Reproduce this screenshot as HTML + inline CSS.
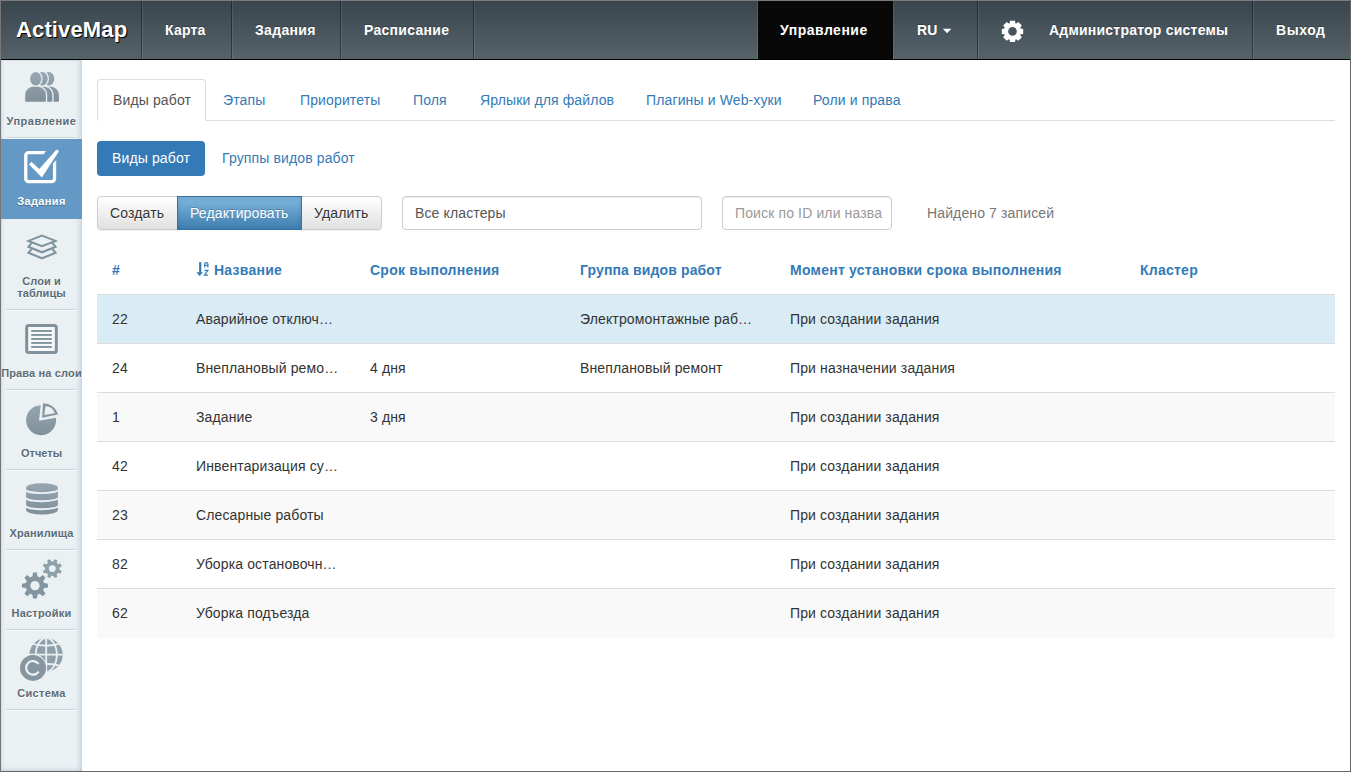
<!DOCTYPE html>
<html><head><meta charset="utf-8">
<style>
*{box-sizing:border-box;margin:0;padding:0}
html,body{width:1351px;height:772px;overflow:hidden;background:#fff}
body{font-family:"Liberation Sans",sans-serif;font-size:14px;color:#333;position:relative;line-height:20px;letter-spacing:.13px}
.frame{position:absolute;left:0;top:0;width:1351px;height:772px;border-top:1px solid #7b7b7b;border-left:1px solid #777;border-right:1px solid #666;border-bottom:1px solid #666;pointer-events:none;z-index:50}
.nav{position:absolute;left:0;top:0;width:1351px;height:60px;background:linear-gradient(#39454c,#56636a);border-bottom:1px solid #000}
.nav .ln{position:absolute;top:1px;width:1px;height:58px;background:rgba(255,255,255,.1)}
.nav .it{position:absolute;top:0;height:59px;line-height:61px;color:#fff;font-weight:bold;font-size:14px;padding-left:22px;white-space:nowrap;border-left:1px solid rgba(255,255,255,.1);border-right:1px solid rgba(0,0,0,.4);text-shadow:0 -1px 0 rgba(0,0,0,.25)}
.nav .brand{left:1px;width:141px;font-size:22px;padding-left:15px;border-left:none!important;line-height:59px;text-shadow:1px 1px 1px #000}
.sidebar{position:absolute;left:1px;top:60px;width:81px;height:711px;background:#ebf0f3;box-shadow:inset 0 1px 0 rgba(205,225,238,.9),inset 3px 0 3px -2px rgba(170,200,220,.5),inset -5px 0 5px -3px rgba(150,185,210,.55),inset 0 -4px 4px -3px rgba(150,185,210,.45)}
.sbsep{position:absolute;left:6px;width:70px;height:2px;border-top:1px solid #c8d8e2;border-bottom:1px solid #f8fafb}
.sbact{position:absolute;left:1px;top:139px;width:81px;height:80px;background:#6399c4}
.lbl{position:absolute;left:1px;width:81px;text-align:center;white-space:nowrap;font-size:11px;font-weight:bold;line-height:13px;color:#5b6b76;text-shadow:0 1px 0 #fff}
.lbl.wh{color:#fff;text-shadow:0 1px 1px rgba(0,0,0,.3)}
.tabs{position:absolute;left:97px;top:79px;width:1238px;height:42px;border-bottom:1px solid #ddd}
.tabs a{position:absolute;top:0;height:41px;line-height:20px;padding:10px 15px;color:#337ab7;text-decoration:none;white-space:nowrap;border:1px solid transparent;border-radius:4px 4px 0 0}
.tabs a.act{color:#555;background:#fff;border-color:#ddd;border-bottom-color:#fff;height:42px}
.pill{position:absolute;top:141px;height:35px;line-height:20px;padding:7px 15px;white-space:nowrap;border-radius:4px;color:#337ab7}
.pill.act{background:#337ab7;color:#fff}
.btn{position:absolute;top:196px;height:34px;line-height:20px;padding:6px 12px;white-space:nowrap;border:1px solid #ccc;color:#333;background:linear-gradient(#fff,#e0e0e0);text-shadow:0 1px 0 #fff;box-shadow:inset 0 1px 0 rgba(255,255,255,.15),0 1px 1px rgba(0,0,0,.075)}
.btn.act{background:linear-gradient(#7fb9df,#3e7daf);border-color:#3271a3;color:#fff;text-shadow:0 -1px 0 rgba(0,0,0,.2);box-shadow:inset 0 2px 4px rgba(0,0,0,.1);z-index:2}
.inp{position:absolute;top:196px;height:34px;line-height:20px;padding:6px 12px;border:1px solid #ccc;border-radius:4px;box-shadow:inset 0 1px 1px rgba(0,0,0,.075);color:#555;white-space:nowrap;overflow:hidden}
.found{position:absolute;left:927px;top:203px;color:#777}
table{position:absolute;left:97px;top:246px;width:1238px;border-collapse:collapse;table-layout:fixed}
th,td{padding:14px 15px;line-height:20px;text-align:left;white-space:nowrap;overflow:hidden;text-overflow:ellipsis;vertical-align:top}
th{color:#337ab7;font-weight:bold;letter-spacing:.25px;border-bottom:1px solid #ddd;height:48px}
td{border-top:1px solid #ddd;height:49px}
tbody tr:first-child td{border-top:none;height:48px}
tr.info td{background:#d9ebf5}
tr.st td{background:#f9f9f9}
</style></head>
<body>
<div class="nav">
  <div class="it brand">ActiveMap</div>
  <div class="it" style="left:142px;width:90px;letter-spacing:.2px">Карта</div>
  <div class="it" style="left:232px;width:109px;letter-spacing:.33px">Задания</div>
  <div class="it" style="left:341px;width:133px;letter-spacing:.29px">Расписание</div>
  <div class="ln" style="left:474px"></div>
  <div class="ln" style="left:757px"></div>
  <div class="it" style="left:758px;width:135px;background:#080808;border-left:none;padding-left:22px;letter-spacing:.5px">Управление</div>
  <div class="it" style="left:893px;width:85px;padding-left:23px">RU</div><svg style="position:absolute;left:940px;top:26px" width="14" height="10" viewBox="940 26 14 10"><path d="M942.9,28.7H951.3L947.1,33.2Z" fill="#fff"/></svg>
  <div class="it" style="left:978px;width:275px;padding-left:70px;letter-spacing:.22px">Администратор системы</div>
  <svg style="position:absolute;left:0;top:0" width="1351" height="60"><path d="M1009.60,23.30L1010.00,20.70L1015.00,20.70L1015.40,23.30A8.60,8.60 0 0 1 1016.17,23.62L1018.30,22.07L1021.83,25.60L1020.28,27.73A8.60,8.60 0 0 1 1020.60,28.50L1023.20,28.90L1023.20,33.90L1020.60,34.30A8.60,8.60 0 0 1 1020.28,35.07L1021.83,37.20L1018.30,40.73L1016.17,39.18A8.60,8.60 0 0 1 1015.40,39.50L1015.00,42.10L1010.00,42.10L1009.60,39.50A8.60,8.60 0 0 1 1008.83,39.18L1006.70,40.73L1003.17,37.20L1004.72,35.07A8.60,8.60 0 0 1 1004.40,34.30L1001.80,33.90L1001.80,28.90L1004.40,28.50A8.60,8.60 0 0 1 1004.72,27.73L1003.17,25.60L1006.70,22.07L1008.83,23.62A8.60,8.60 0 0 1 1009.60,23.30ZM1008.20,31.40a4.30,4.30 0 1 0 8.60,0a4.30,4.30 0 1 0 -8.60,0Z" fill="#fff" fill-rule="evenodd"/></svg>
  <div class="it" style="left:1253px;width:97px;border-right:none;letter-spacing:.55px">Выход</div>
</div>

<div class="sidebar"></div>
<div class="sbsep" style="top:137px"></div>
<div class="sbsep" style="top:309px"></div>
<div class="sbsep" style="top:389px"></div>
<div class="sbsep" style="top:469px"></div>
<div class="sbsep" style="top:549px"></div>
<div class="sbsep" style="top:629px"></div>
<div class="sbsep" style="top:709px"></div>
<div class="sbact"></div>
<div class="lbl" style="top:115px;letter-spacing:.5px">Управление</div>
<div class="lbl wh" style="top:195px;letter-spacing:.35px">Задания</div>
<div class="lbl" style="top:275px;letter-spacing:.1px;line-height:12px">Слои и<br>таблицы</div>
<div class="lbl dk" style="top:367px;letter-spacing:.15px">Права на слои</div>
<div class="lbl" style="top:447px;letter-spacing:0px">Отчеты</div>
<div class="lbl" style="top:527px;letter-spacing:.1px">Хранилища</div>
<div class="lbl" style="top:607px;letter-spacing:.2px">Настройки</div>
<div class="lbl" style="top:687px;letter-spacing:.3px">Система</div>
<div class="tabs">
  <a class="act" style="left:0;width:109px">Виды работ</a>
  <a style="left:110px">Этапы</a>
  <a style="left:187px">Приоритеты</a>
  <a style="left:300px">Поля</a>
  <a style="left:367px">Ярлыки для файлов</a>
  <a style="left:533px">Плагины и Web-хуки</a>
  <a style="left:700px">Роли и права</a>
</div>

<div class="pill act" style="left:97px;width:108px">Виды работ</div>
<div class="pill" style="left:207px">Группы видов работ</div>

<div class="btn" style="left:97px;width:81px;border-radius:4px 0 0 4px">Создать</div>
<div class="btn act" style="left:177px;width:125px">Редактировать</div>
<div class="btn" style="left:301px;width:81px;border-radius:0 4px 4px 0">Удалить</div>

<div class="inp" style="left:402px;width:300px">Все кластеры</div>
<div class="inp" style="left:722px;width:170px;color:#999">Поиск по ID или назва</div>
<div class="found">Найдено 7 записей</div>

<table>
<colgroup><col style="width:84px"><col style="width:174px"><col style="width:210px"><col style="width:210px"><col style="width:350px"><col style="width:210px"></colgroup>
<thead><tr><th>#</th><th style="padding-left:33px">Название</th><th>Срок выполнения</th><th style="letter-spacing:.13px">Группа видов работ</th><th>Момент установки срока выполнения</th><th>Кластер</th></tr></thead>
<tbody>
<tr class="info"><td>22</td><td>Аварийное отключ…</td><td></td><td>Электромонтажные раб…</td><td>При создании задания</td><td></td></tr>
<tr><td>24</td><td>Внеплановый ремо…</td><td>4 дня</td><td>Внеплановый ремонт</td><td>При назначении задания</td><td></td></tr>
<tr class="st"><td>1</td><td>Задание</td><td>3 дня</td><td></td><td>При создании задания</td><td></td></tr>
<tr><td>42</td><td>Инвентаризация су…</td><td></td><td></td><td>При создании задания</td><td></td></tr>
<tr class="st"><td>23</td><td>Слесарные работы</td><td></td><td></td><td>При создании задания</td><td></td></tr>
<tr><td>82</td><td>Уборка остановочн…</td><td></td><td></td><td>При создании задания</td><td></td></tr>
<tr class="st"><td>62</td><td>Уборка подъезда</td><td></td><td></td><td>При создании задания</td><td></td></tr>
</tbody>
</table>

<svg class="sbicons" style="position:absolute;left:0;top:0;z-index:5" width="82" height="772" viewBox="0 0 82 772">
<defs>
<linearGradient id="ig" x1="0" y1="0" x2="0" y2="1"><stop offset="0" stop-color="#95a6b0"/><stop offset="1" stop-color="#7f909a"/></linearGradient>
<clipPath id="globeclip"><circle cx="46.05" cy="654.85" r="16.85"/></clipPath>
</defs>
<!-- people -->
<linearGradient id="pg" gradientUnits="userSpaceOnUse" x1="0" y1="72" x2="0" y2="102"><stop offset="0" stop-color="#97a8b2"/><stop offset="1" stop-color="#7f909a"/></linearGradient>
<g fill="url(#pg)" stroke="#ebf0f3" stroke-width="2.6" paint-order="stroke">
<g transform="translate(13,0)"><path d="M25.2,101V95C25.2,90 29.5,86.2 35.5,86.2C41.5,86.2 45.9,90 45.9,95V101Q45.9,101.7 45.2,101.7H25.9Q25.2,101.7 25.2,101Z"/><ellipse cx="35.7" cy="78.8" rx="5.6" ry="6.7"/></g>
<g transform="translate(6.4,0)"><path d="M25.2,101V95C25.2,90 29.5,86.2 35.5,86.2C41.5,86.2 45.9,90 45.9,95V101Q45.9,101.7 45.2,101.7H25.9Q25.2,101.7 25.2,101Z"/><ellipse cx="35.7" cy="78.8" rx="5.6" ry="6.7"/></g>
<g transform="translate(0,0)"><path d="M25.2,101V95C25.2,90 29.5,86.2 35.5,86.2C41.5,86.2 45.9,90 45.9,95V101Q45.9,101.7 45.2,101.7H25.9Q25.2,101.7 25.2,101Z"/><ellipse cx="35.7" cy="78.8" rx="5.6" ry="6.7"/></g>
</g>
<!-- checkbox -->
<rect x="25.75" y="152.55" width="28.8" height="29.1" rx="3" fill="none" stroke="#fff" stroke-width="3.3"/>
<path d="M48.8,147L42.6,155.8L52,164.5L60.2,156V147Z" fill="#6399c4"/>
<path d="M29,164.5L31.4,161.8L39.3,168.9L56.3,149.8Q58,149.6 59,151.3L42.2,176.9Q41.8,177.4 41.4,176.9Z" fill="#fff"/>
<!-- layers -->
<g fill="none" stroke="#7f939e" stroke-width="2" stroke-linejoin="miter">
<path d="M32.4,248.2L28.4,252.8L42,258.3L55.6,252.8L51.6,248.2"/>
<path d="M32.4,242.2L28.4,246.8L42,252.3L55.6,246.8L51.6,242.2"/>
<path d="M42,235.6L55.6,240.9L42,246.2L28.4,240.9Z" fill="#ebf0f3"/>
</g>
<!-- list -->
<rect x="26.7" y="325.5" width="29.6" height="26.9" rx="2" fill="#f6f8f9" stroke="#82929c" stroke-width="3"/>
<g fill="#82929c"><rect x="31.2" y="330" width="20.6" height="1.9"/><rect x="31.2" y="334" width="20.6" height="1.9"/><rect x="31.2" y="338" width="20.6" height="1.9"/><rect x="31.2" y="342" width="20.6" height="1.9"/><rect x="31.2" y="346" width="20.6" height="1.9"/></g>
<!-- pie -->
<path d="M39.03,420.7L40.7,405.2A15,15 0 1 0 55.9,417.8Z" fill="url(#ig)"/>
<path d="M42.06,417.7L43.07,403.2A15.2,15.2 0 0 1 57.9,414.6ZM44.25,415L45.6,406.1A10.5,10.5 0 0 1 54.85,413.3Z" fill="#8596a0" fill-rule="evenodd"/>
<!-- database -->
<g fill="url(#ig)">
<path d="M26.1,487.4A15.9,4.2 0 0 1 57.9,487.4V510.2A15.9,4.2 0 0 1 26.1,510.2Z"/>
</g>
<g fill="none" stroke="#ebf0f3" stroke-width="1.9">
<path d="M25.5,489.5A16.5,3.6 0 0 0 58.5,489.5"/>
<path d="M25.5,497.6A16.5,3.6 0 0 0 58.5,497.6"/>
<path d="M25.5,505.6A16.5,3.6 0 0 0 58.5,505.6"/>
</g>
<!-- gears -->
<path d="M32.46,576.54L33.01,572.60L36.91,572.60L37.46,576.54A9.40,9.40 0 0 1 39.60,577.42L42.77,575.03L45.53,577.79L43.14,580.96A9.40,9.40 0 0 1 44.02,583.10L47.96,583.65L47.96,587.55L44.02,588.10A9.40,9.40 0 0 1 43.14,590.24L45.53,593.41L42.77,596.17L39.60,593.78A9.40,9.40 0 0 1 37.46,594.66L36.91,598.60L33.01,598.60L32.46,594.66A9.40,9.40 0 0 1 30.32,593.78L27.15,596.17L24.39,593.41L26.78,590.24A9.40,9.40 0 0 1 25.90,588.10L21.96,587.55L21.96,583.65L25.90,583.10A9.40,9.40 0 0 1 26.78,580.96L24.39,577.79L27.15,575.03L30.32,577.42A9.40,9.40 0 0 1 32.46,576.54ZM30.30,585.60a4.66,4.66 0 1 0 9.32,0a4.66,4.66 0 1 0 -9.32,0Z" fill="#8295a0" fill-rule="evenodd"/>
<path d="M53.20,561.46L54.63,559.18L57.31,560.29L56.71,562.91A7.20,7.20 0 0 1 57.99,564.19L60.61,563.59L61.72,566.27L59.44,567.70A7.20,7.20 0 0 1 59.44,569.50L61.72,570.93L60.61,573.61L57.99,573.01A7.20,7.20 0 0 1 56.71,574.29L57.31,576.91L54.63,578.02L53.20,575.74A7.20,7.20 0 0 1 51.40,575.74L49.97,578.02L47.29,576.91L47.89,574.29A7.20,7.20 0 0 1 46.61,573.01L43.99,573.61L42.88,570.93L45.16,569.50A7.20,7.20 0 0 1 45.16,567.70L42.88,566.27L43.99,563.59L46.61,564.19A7.20,7.20 0 0 1 47.89,562.91L47.29,560.29L49.97,559.18L51.40,561.46A7.20,7.20 0 0 1 53.20,561.46ZM48.85,568.60a3.45,3.45 0 1 0 6.90,0a3.45,3.45 0 1 0 -6.90,0Z" fill="#8ea0aa" fill-rule="evenodd"/>
<!-- globe -->
<g clip-path="url(#globeclip)">
<circle cx="46.05" cy="654.85" r="16.85" fill="#8fa0aa"/>
<g fill="none" stroke="#ebf0f3" stroke-width="1.8">
<line x1="46.2" y1="636" x2="46.2" y2="673"/>
<ellipse cx="46.3" cy="654.85" rx="10.5" ry="16.85"/>
<line x1="28" y1="654.7" x2="64" y2="654.7"/>
<path d="M29,642.8Q46,648.5 63,642.8"/>
<path d="M29,666.6Q46,660.9 63,666.6"/>
</g>
</g>
<circle cx="33" cy="667.9" r="13" fill="#8596a0" stroke="#ebf0f3" stroke-width="1.8" paint-order="stroke"/>
<path d="M38.5,663.9A6.8,6.8 0 1 0 38.6,671.6" fill="none" stroke="#eef2f4" stroke-width="2.2"/>
</svg>
<svg style="position:absolute;left:0;top:0;z-index:3" width="240" height="290" viewBox="0 0 240 290">
<g fill="#337ab7"><rect x="199.1" y="262.1" width="2.2" height="11"/><path d="M196.3,272.3H202.9L199.6,276Z"/></g>
<g fill="none" stroke="#337ab7" stroke-width="1.2"><path d="M204.7,267.5V264.2Q204.7,262.7 206.3,262.7Q207.9,262.7 207.9,264.2V267.5M204.7,265.3H207.9"/><path d="M204.4,270.3H207.9L204.4,275.2H208.1"/></g>
</svg>
<div class="frame"></div>
</body></html>
